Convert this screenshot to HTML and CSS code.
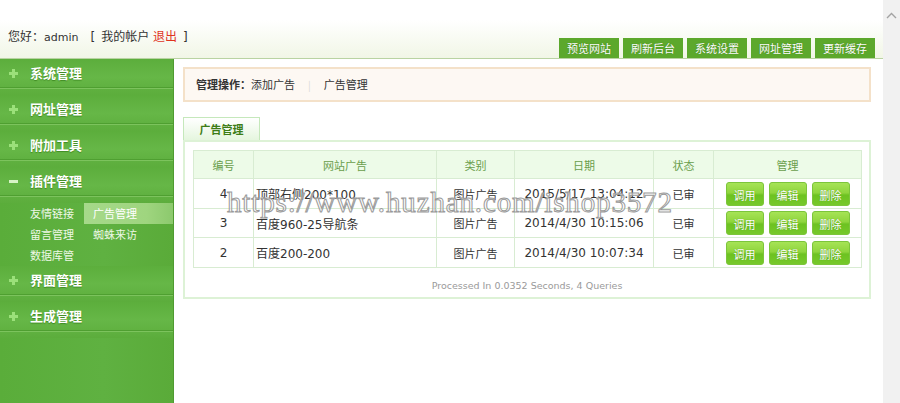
FILE: index.html
```html
<!DOCTYPE html>
<html lang="zh-CN">
<head>
<meta charset="utf-8">
<title>广告管理</title>
<link rel="stylesheet" href="styles.css">
</head>
<body>
<div class="app">
  <div class="page">
    <header class="top">
      <div class="greet">您好：<span class="lat">admin</span><span class="bracket">[</span>我的帐户 <a class="logout" href="#">退出</a><span class="bracket end">]</span></div>
      <nav class="topnav">
        <a href="#" class="tbtn">预览网站</a>
        <a href="#" class="tbtn">刷新后台</a>
        <a href="#" class="tbtn">系统设置</a>
        <a href="#" class="tbtn">网址管理</a>
        <a href="#" class="tbtn">更新缓存</a>
      </nav>
    </header>
    <div class="body">
      <aside class="side">
        <div class="mitem"><span class="ico plus"></span>系统管理</div>
        <div class="mitem"><span class="ico plus"></span>网址管理</div>
        <div class="mitem"><span class="ico plus"></span>附加工具</div>
        <div class="mitem"><span class="ico minus"></span>插件管理</div>
        <div class="sub">
          <div class="subrow"><span class="slink">友情链接</span><span class="slink on">广告管理</span></div>
          <div class="subrow"><span class="slink">留言管理</span><span class="slink">蜘蛛来访</span></div>
          <div class="subrow"><span class="slink">数据库管理</span></div>
        </div>
        <div class="mitem"><span class="ico plus"></span>界面管理</div>
        <div class="mitem"><span class="ico plus"></span>生成管理</div>
      </aside>
      <main class="main">
        <div class="ops"><b>管理操作：</b>添加广告<span class="sep">|</span>广告管理</div>
        <div class="tabbar"><span class="tab">广告管理</span></div>
        <div class="panel">
          <table class="grid">
            <colgroup>
              <col class="c1"><col class="c2"><col class="c3"><col class="c4"><col class="c5"><col class="c6">
            </colgroup>
            <thead>
              <tr><th>编号</th><th>网站广告</th><th>类别</th><th>日期</th><th>状态</th><th>管理</th></tr>
            </thead>
            <tbody>
              <tr class="r1"><td class="ctr">4</td><td class="name">顶部右侧200*100</td><td class="ctr">图片广告</td><td class="ctr">2015/5/17 13:04:12</td><td class="ctr">已审</td><td class="acts"><span class="gbtn">调用</span><span class="gbtn">编辑</span><span class="gbtn">删除</span></td></tr>
              <tr class="r2"><td class="ctr">3</td><td class="name">百度960-25导航条</td><td class="ctr">图片广告</td><td class="ctr">2014/4/30 10:15:06</td><td class="ctr">已审</td><td class="acts"><span class="gbtn">调用</span><span class="gbtn">编辑</span><span class="gbtn">删除</span></td></tr>
              <tr class="r3"><td class="ctr">2</td><td class="name">百度200-200</td><td class="ctr">图片广告</td><td class="ctr">2014/4/30 10:07:34</td><td class="ctr">已审</td><td class="acts"><span class="gbtn">调用</span><span class="gbtn">编辑</span><span class="gbtn">删除</span></td></tr>
            </tbody>
          </table>
          <div class="foot">Processed In 0.0352 Seconds, 4 Queries</div>
        </div>
      </main>
    </div>
  </div>
  <div class="scrollbar">
    <svg class="arrow" width="11" height="7" viewBox="0 0 11 7"><path d="M1 6 L5.5 1.5 L10 6" fill="none" stroke="#a3a3a3" stroke-width="1.4"/></svg>
  </div>
  <div class="watermark">https://www.huzhan.com/ishop3572</div>
</div>
</body>
</html>
```

FILE: styles.css
```css
* { box-sizing: border-box; }
html, body { margin: 0; padding: 0; }
body {
  font-family: "DejaVu Sans", "Noto Sans CJK SC", sans-serif;
  font-size: 12px;
  color: #333;
  background: #fff;
}
a { text-decoration: none; color: inherit; }

.app {
  position: relative;
  display: flex;
  width: 900px;
  height: 403px;
  overflow: hidden;
}
.page {
  flex: 1;
  display: flex;
  flex-direction: column;
  min-width: 0;
}

/* header */
.top {
  height: 59px;
  display: flex;
  justify-content: space-between;
  align-items: flex-end;
  background: linear-gradient(#ffffff 0%, #ffffff 35%, #f1f6e6 100%);
  border-bottom: 1px solid #b9d3a2;
}
.greet {
  margin: 0 0 10px 8px;
  font-size: 12px;
  line-height: 20px;
  color: #333;
  font-family: "DejaVu Sans", "Noto Sans CJK SC", sans-serif;
}
.lat { font-size: 11px; }
.bracket { margin: 0 6px 0 12px; }
.bracket.end { margin: 0 0 0 6px; }
.logout { color: #e0341e; }
.topnav {
  display: flex;
  gap: 4px;
  margin-right: 8px;
}
.tbtn {
  display: block;
  height: 20px;
  line-height: 21px;
  padding: 0 8px;
  background: #5ca82c;
  color: #fff;
  font-size: 11px;
  font-family: "Noto Sans CJK SC", sans-serif;
  text-shadow: 0 0 1px #3c7a18;
}

/* body */
.body {
  flex: 1;
  display: flex;
  min-height: 0;
}
.side {
  width: 174px;
  flex: none;
  background: linear-gradient(90deg, #5aad3a 0%, #5fb141 60%, #5aab39 100%);
  border-right: 1px solid #4f9b31;
}
.mitem {
  height: 36px;
  line-height: 28px;
  padding-left: 30px;
  position: relative;
  color: #fff;
  font-weight: bold;
  font-size: 13px;
  font-family: "Noto Sans CJK SC", sans-serif;
  text-shadow: 0 1px 1px #3f8a22;
  background:
    linear-gradient(#4f9f31, #4f9f31) 0 28px / 100% 1px no-repeat,
    linear-gradient(#7cc35d, #7cc35d) 0 29px / 100% 1px no-repeat,
    linear-gradient(#5cae3c 0%, #66b747 50%, #5cad3c 100%);
}
.ico {
  position: absolute;
  left: 9px;
  top: 10px;
  width: 9px;
  height: 9px;
}
.ico.plus {
  background:
    linear-gradient(#9be07a, #9be07a) center / 3px 9px no-repeat,
    linear-gradient(#9be07a, #9be07a) center / 9px 3px no-repeat;
}
.ico.minus {
  background: linear-gradient(#d7f3c6, #d7f3c6) center / 9px 3px no-repeat;
}
.sub {
  height: 63px;
}
.subrow {
  display: flex;
  height: 21px;
  line-height: 21px;
}
.slink {
  display: block;
  color: #eef8e6;
  font-size: 11px;
  font-family: "Noto Sans CJK SC", sans-serif;
}
.slink:first-child { padding-left: 30px; width: 84px; }
.slink + .slink { padding-left: 9px; }
.slink.on {
  flex: 1;
  background: linear-gradient(90deg, #a6d98a, #9fd57f 70%, #8cc96d);
  color: #fff;
}

/* main */
.main {
  flex: 1;
  padding: 8px 12px 0 9px;
  min-width: 0;
}
.ops {
  height: 35px;
  border: 2px solid #f4e1c9;
  background: #fdf8f3;
  padding-left: 11px;
  line-height: 31px;
  font-family: "Noto Sans CJK SC", sans-serif;
  font-size: 11px;
  color: #333;
}
.ops b { font-weight: bold; }
.sep { color: #d8d8d8; margin: 0 13px; font-size: 10px; }
.tabbar {
  margin-top: 15px;
  display: flex;
}
.tab {
  width: 77px;
  height: 23px;
  line-height: 23px;
  text-align: center;
  border: 1px solid #c5e8bb;
  border-bottom: none;
  background: linear-gradient(#ffffff, #e5f6de);
  color: #3d7d16;
  font-weight: bold;
  font-size: 11px;
  font-family: "Noto Sans CJK SC", sans-serif;
}
.panel {
  border: 2px solid #ddf2d6;
  padding: 8px 8px 0 8px;
}
.grid {
  width: 100%;
  border-collapse: collapse;
  table-layout: fixed;
}
.c1 { width: 60px; }
.c2 { width: 183px; }
.c3 { width: 78px; }
.c4 { width: 139px; }
.c5 { width: 60px; }
.c6 { width: 148px; }
.grid th, .grid td {
  border: 1px solid #d8ecd2;
  padding: 0;
}
.grid th {
  height: 28px;
  background: #edfbe8;
  color: #6a9e4c;
  font-weight: normal;
  font-size: 11px;
  font-family: "Noto Sans CJK SC", sans-serif;
}
.grid td {
  height: 29px;
  font-size: 12px;
  color: #333;
}
.grid tr.r1 td, .grid tr.r3 td { height: 30px; }
.grid .ctr { text-align: center; }
.grid .name { padding-left: 2px; }
.grid td.ctr:nth-child(3), .grid td.ctr:nth-child(5) {
  font-family: "Noto Sans CJK SC", sans-serif;
  font-size: 11px;
}
.acts { text-align: center; font-size: 0 !important; }
.gbtn {
  display: inline-block;
  width: 38px;
  height: 24px;
  line-height: 24px;
  margin: 0 2.5px;
  border-radius: 3px;
  border: 1px solid #7cc53b;
  background: linear-gradient(#a6e356 0%, #8fd53d 45%, #6dc221 55%, #76c92a 100%);
  color: #fff;
  font-size: 11px;
  font-family: "Noto Sans CJK SC", sans-serif;
  text-shadow: 0 0 1px #4d9613;
  vertical-align: middle;
}
.foot {
  height: 29px;
  padding-top: 12px;
  line-height: 12px;
  text-align: center;
  color: #9a9a9a;
  font-size: 9.5px;
}

/* scrollbar */
.scrollbar {
  width: 17px;
  flex: none;
  background: #f1f1f1;
  display: flex;
  justify-content: center;
  padding-top: 12px;
}
.arrow { display: block; }

/* watermark overlay */
.watermark {
  position: absolute;
  left: 227px;
  top: 185px;
  font-family: "Liberation Serif", serif;
  font-size: 29px;
  letter-spacing: 0.85px;
  line-height: 34px;
  color: rgba(255, 255, 255, 0.55);
  -webkit-text-stroke: 1px #9a9a9a;
  white-space: nowrap;
  pointer-events: none;
}
```
